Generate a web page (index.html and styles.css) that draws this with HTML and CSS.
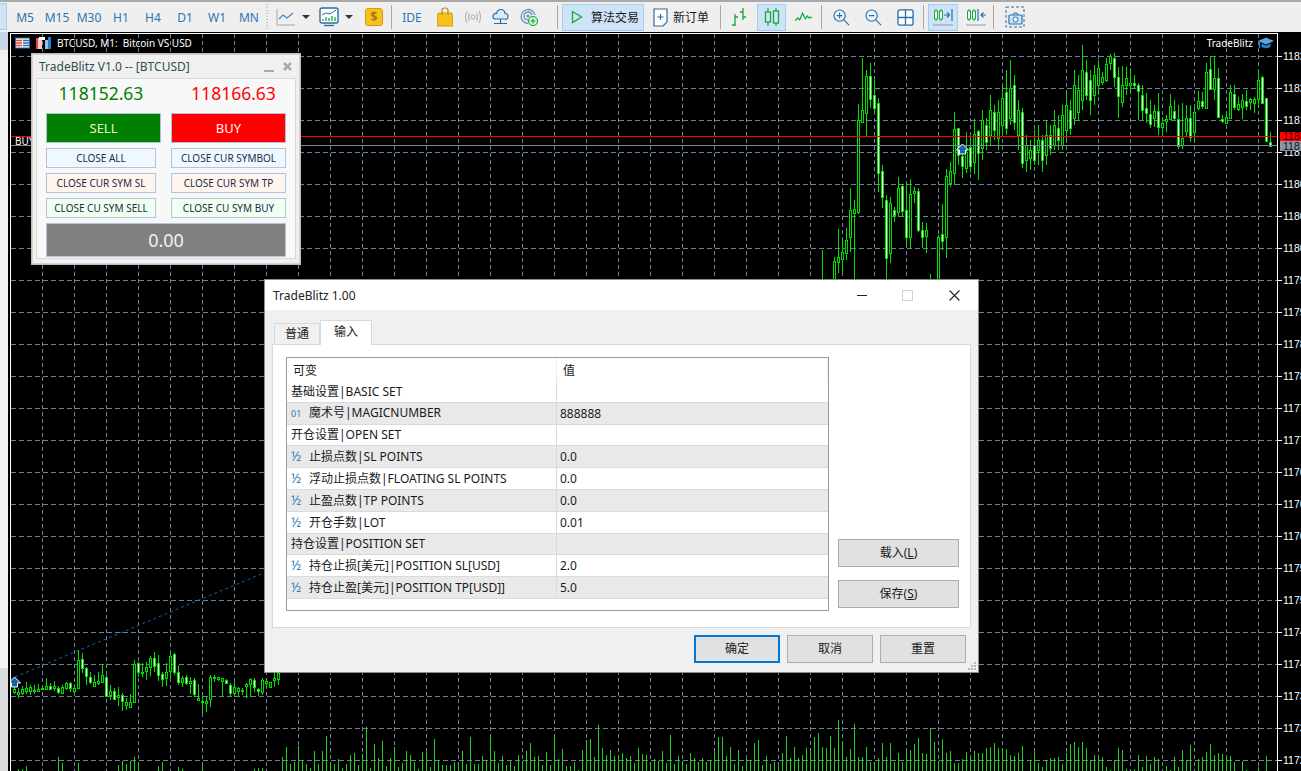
FILE: index.html
```html
<!DOCTYPE html>
<html lang="en">
<head>
    <meta charset="UTF-8">
    <title>MetaTrader - BTCUSD, M1</title>
    <link rel="stylesheet" href="styles.css">
</head>
<body>
    <div class="toolbar">
        <div class="stub"></div>
        <div class="tf">M5</div>
        <div class="tf">M15</div>
        <div class="tf">M30</div>
        <div class="tf">H1</div>
        <div class="tf">H4</div>
        <div class="tf">D1</div>
        <div class="tf">W1</div>
        <div class="tf">MN</div>
        <div class="grip"></div>

        <svg class="tool t-line" viewBox="0 0 20 20"><path d="M1 2V18H19" fill="none" stroke="#a8a8a8"/><path d="M3 12L7 8L11 11L17 6" fill="none" stroke="#3f86c4" stroke-width="1.2"/></svg>
        <div class="caret c-line"></div>
        <svg class="tool t-chart" viewBox="0 0 20 20"><rect x="1" y="1" width="18" height="15" rx="2" fill="#fff" stroke="#2b6ea6" stroke-width="1.4"/><path d="M3 8L7 6L11 7L17 3" fill="none" stroke="#2b6ea6"/><path d="M4 14V12M7 14V10M10 14V11M13 14V9M16 14V10" stroke="#22b14c" stroke-width="1.4"/><path d="M5 18.5H15" stroke="#2b6ea6" stroke-width="1.4"/></svg>
        <div class="caret c-chart"></div>
        <div class="gold">$</div>
        <div class="sep s-1"></div>
        <div class="ide">IDE</div>
        <svg class="tool t-bag" viewBox="0 0 16 20"><path d="M1 6H15L16 19H0Z" fill="#f6c21c" stroke="#d99a10"/><path d="M5 8V3Q5 1 8 1T11 3V8" fill="none" stroke="#b9860b" stroke-width="1.2"/></svg>
        <svg class="tool t-signal" viewBox="0 0 16 16"><circle cx="8" cy="8" r="2" fill="none" stroke="#b4b4b4" stroke-width="1.2"/><path d="M4.5 4Q2.5 8 4.5 12M11.5 4Q13.5 8 11.5 12M2 2Q-1 8 2 14M14 2Q17 8 14 14" fill="none" stroke="#b4b4b4" stroke-width="1.2"/></svg>
        <svg class="tool t-cloud" viewBox="0 0 17 18"><path d="M4 11Q0.5 11 1 8T4.5 5.5Q5.5 1.5 9 1.5T13 5.5Q16.5 6 16 9T13 11Z" fill="#d7ebfa" stroke="#2b6ea6" stroke-width="1.2"/><path d="M8.5 11V15M2 15.5H15" stroke="#2b6ea6" stroke-width="1.2"/></svg>
        <svg class="tool t-net" viewBox="0 0 18 18"><path d="M8 15.5A7 7 0 1 1 15 7M8 12A4 4 0 1 1 12 7" fill="none" stroke="#6f8fab" stroke-width="1.3"/><circle cx="8" cy="8" r="1.5" fill="#6f8fab"/><circle cx="13" cy="13" r="4.5" fill="#d8f5dc" stroke="#1fa53c" stroke-width="1.2"/><path d="M13 10.5V15.5M10.5 13H15.5" stroke="#1fa53c" stroke-width="1.2"/></svg>
        <div class="sep s-2"></div>
        <div class="algo">
            <svg class="play" viewBox="0 0 12 14"><path d="M1.5 1.5L10.5 7L1.5 12.5Z" fill="none" stroke="#18a83c" stroke-width="1.3"/></svg>
            <span>算法交易</span>
        </div>
        <div class="order">
            <svg class="order-icon" viewBox="0 0 15 19"><path d="M1 1H14V14L10 18H1Z" fill="#fff" stroke="#2b6ea6" stroke-width="1.2"/><path d="M7.5 6V12M4.5 9H10.5" stroke="#2b6ea6" stroke-width="1.2"/></svg>
            <span>新订单</span>
        </div>
        <div class="sep s-3"></div>
        <svg class="tool t-bars" viewBox="0 0 18 20"><path d="M5 7V19M2 18H5M5 10H8M13 1V13M10 5H13M13 10H16" fill="none" stroke="#18a83c" stroke-width="1.3"/></svg>
        <div class="active t-cand"><svg class="icon" viewBox="0 0 18 20"><path d="M5 1V19M13 1V19" stroke="#18a83c" stroke-width="1.2"/><rect x="2.5" y="5" width="5" height="10" fill="#d0e6fa" stroke="#18a83c" stroke-width="1.3"/><rect x="10.5" y="4" width="5" height="12" fill="#d0e6fa" stroke="#18a83c" stroke-width="1.3"/></svg></div>
        <svg class="tool t-wave" viewBox="0 0 18 14"><path d="M0 11L3 8L5 10L8 3L11 9L13 6L15 8L18 7" fill="none" stroke="#18a83c" stroke-width="1.3"/></svg>
        <div class="sep s-4"></div>
        <svg class="tool t-zin" viewBox="0 0 18 18"><circle cx="7" cy="7" r="6" fill="#eaf4fc" stroke="#2b6ea6" stroke-width="1.2"/><path d="M11.5 11.5L17 17M4 7H10M7 4V10" stroke="#2b6ea6" stroke-width="1.2"/></svg>
        <svg class="tool t-zout" viewBox="0 0 18 18"><circle cx="7" cy="7" r="6" fill="#eaf4fc" stroke="#2b6ea6" stroke-width="1.2"/><path d="M11.5 11.5L17 17M4 7H10" stroke="#2b6ea6" stroke-width="1.2"/></svg>
        <svg class="tool t-grid" viewBox="0 0 18 18"><rect x="1" y="1" width="16" height="16" rx="2" fill="#fff" stroke="#2b6ea6" stroke-width="1.4"/><path d="M9 1V17M1 9H17" stroke="#2b6ea6" stroke-width="1.4"/></svg>
        <div class="sep s-5"></div>
        <div class="active t-auto"><svg class="icon" viewBox="0 0 22 20"><path d="M4 2V14M9 2V14" stroke="#18a83c"/><rect x="2.5" y="4" width="3" height="8" fill="#fff" stroke="#18a83c"/><rect x="7.5" y="4" width="3" height="8" fill="#fff" stroke="#18a83c"/><path d="M12 8H17M15 5.5L17.5 8L15 10.5M20 2V14" fill="none" stroke="#2b6ea6" stroke-width="1.2"/><path d="M1 18H21" stroke="#9a9a9a"/></svg></div>
        <svg class="tool t-shift" viewBox="0 0 22 20"><path d="M4 2V14M9 2V14" stroke="#18a83c"/><rect x="2.5" y="4" width="3" height="8" fill="#fff" stroke="#18a83c"/><rect x="7.5" y="4" width="3" height="8" fill="#fff" stroke="#18a83c"/><path d="M13 2V14M21 8H16M18.500 5.500L16 8L18.500 10.500" fill="none" stroke="#2b6ea6" stroke-width="1.2"/><path d="M1 18H21" stroke="#9a9a9a"/></svg>
        <div class="sep s-6"></div>
        <svg class="tool t-shot" viewBox="0 0 20 22"><rect x="1" y="1" width="18" height="20" fill="none" stroke="#2b6ea6" stroke-dasharray="3 2"/><rect x="4" y="9" width="13" height="9" rx="1" fill="#cfe4f6" stroke="#2b6ea6" stroke-width="1.2"/><circle cx="10.500" cy="13.500" r="2.500" fill="#fff" stroke="#2b6ea6"/><path d="M8 9L9 7H12L13 9" fill="none" stroke="#2b6ea6"/></svg>
    </div>

    <div class="workspace">
        <div class="side">
            <div class="side-top"></div>
            <div class="side-mid"></div>
            <div class="side-low"></div>
        </div>
        <div class="chart">
            <svg id="chartCanvas" class="chart-canvas" viewBox="10 33 1291 738"></svg>

            <div class="chart-title">
                <svg class="title-icon" viewBox="0 0 15 11"><rect x="0.500" y="0.500" width="14" height="10" fill="#fff" stroke="#2b6ea6"/><path d="M1 3H7M1 5.500H7M1 8H7" stroke="#e0453a" stroke-width="1.300"/><path d="M8 3H14M8 5.500H14M8 8H14" stroke="#2b6ea6" stroke-width="1.300"/></svg>
                <svg class="title-icon" viewBox="0 0 15 12"><path d="M0 1H6V12H0Z" fill="#f8c9c2"/><path d="M0 1H2V12H0Z" fill="#e0453a"/><path d="M9 3H15V12H9Z" fill="#8ec3ee"/><path d="M12 0H15V12H12Z" fill="#2b7fc4"/><rect x="3" y="0" width="6" height="3" fill="#fff"/></svg>
                <span>BTCUSD, M1:&nbsp; Bitcoin VS USD</span>
            </div>
            <div class="brand">
                <span>TradeBlitz</span>
                <svg class="hat" viewBox="0 0 16 13"><path d="M0 4L8 0.500L16 4L8 7.500Z" fill="#5aa7e0"/><path d="M3.500 6.500V10Q8 12.500 12.500 10V6.500L8 8.500Z" fill="#2b7fc4"/><path d="M1.500 5V11" stroke="#2b7fc4" stroke-width="1.500"/></svg>
            </div>
            <div class="buy-tag">BUY</div>

            <!-- EA panel -->
            <div class="panel">
                <div class="panel-head">
                    <span>TradeBlitz V1.0 -- [BTCUSD]</span>
                    <div class="panel-min"></div>
                    <svg class="panel-close" viewBox="0 0 9 9"><path d="M1 1L8 8M8 1L1 8" stroke="#a9a9a9" stroke-width="2.500"/></svg>
                </div>
                <div class="panel-body">
                    <div class="price price-bid">118152.63</div>
                    <div class="price price-ask">118166.63</div>
                    <div class="big sell">SELL</div>
                    <div class="big buy">BUY</div>
                    <div class="small blue short">CLOSE ALL</div>
                    <div class="small blue">CLOSE CUR SYMBOL</div>
                    <div class="small shell short">CLOSE CUR SYM SL</div>
                    <div class="small shell">CLOSE CUR SYM TP</div>
                    <div class="small dew short">CLOSE CU SYM SELL</div>
                    <div class="small dew">CLOSE CU SYM BUY</div>
                    <div class="profit">0.00</div>
                </div>
            </div>

            <!-- properties dialog -->
            <div class="dialog">
                <div class="dialog-title">
                    <span>TradeBlitz 1.00</span>
                    <div class="win-min"></div>
                    <div class="win-max"></div>
                    <svg class="win-close" viewBox="0 0 11 11"><path d="M0.500 0.500L10.500 10.500M10.500 0.500L0.500 10.500" stroke="#222" stroke-width="1.100"/></svg>
                </div>
                <div class="tabs">
                    <div class="tab">普通</div>
                    <div class="tab tab-on">输入</div>
                </div>
                <div class="tab-page">
                    <div class="grid-box">
                        <table class="params">
                            <tr class="head"><th class="col-name">可变</th><th>值</th></tr>
                            <tr><td class="group">基础设置|BASIC SET</td><td></td></tr>
                            <tr class="alt"><td><span class="type type-int">01</span>魔术号|MAGICNUMBER</td><td>888888</td></tr>
                            <tr><td class="group">开仓设置|OPEN SET</td><td></td></tr>
                            <tr class="alt"><td><span class="type">½</span>止损点数|SL POINTS</td><td>0.0</td></tr>
                            <tr><td><span class="type">½</span>浮动止损点数|FLOATING SL POINTS</td><td>0.0</td></tr>
                            <tr class="alt"><td><span class="type">½</span>止盈点数|TP POINTS</td><td>0.0</td></tr>
                            <tr><td><span class="type">½</span>开仓手数|LOT</td><td>0.01</td></tr>
                            <tr class="alt"><td class="group">持仓设置|POSITION SET</td><td></td></tr>
                            <tr><td><span class="type">½</span>持仓止损[美元]|POSITION SL[USD]</td><td>2.0</td></tr>
                            <tr class="alt"><td><span class="type">½</span>持仓止盈[美元]|POSITION TP[USD]]</td><td>5.0</td></tr>
                        </table>
                    </div>
                    <div class="side-btns">
                        <div class="btn">载入(<u>L</u>)</div>
                        <div class="btn">保存(<u>S</u>)</div>
                    </div>
                </div>
                <div class="dialog-btns">
                    <div class="btn btn-main">确定</div>
                    <div class="btn">取消</div>
                    <div class="btn">重置</div>
                </div>
                <svg class="resize" viewBox="0 0 9 9"><path d="M6 0h2v2H6zM3 3h2v2H3zM6 3h2v2H6zM0 6h2v2H0zM3 6h2v2H3zM6 6h2v2H6z" fill="#b5b5b5"/></svg>
            </div>
        </div>
    </div>
    <script src="chart.js"></script>
</body>
</html>
```

FILE: styles.css
```css
html, body {
    margin: 0;
    height: 100%;
    overflow: hidden;
}
body {
    display: flex;
    flex-direction: column;
    background-color: #000;
    font-family: "Noto Sans", "Noto Sans CJK SC", sans-serif;
    font-size: 12px;
    color: #1a1a1a;
}

/* toolbar */
.toolbar {
    height: 30px;
    flex: none;
    display: flex;
    align-items: center;
    padding-left: 9px;
    background-color: #efefef;
    border-top: 2px solid #a9a9a9;
    position: relative;
}
.stub {
    position: absolute;
    left: 0;
    top: 1px;
    width: 6px;
    height: 25px;
    background-color: #cfe3f7;
    border: 1px solid #a5cdf0;
    border-left: none;
}
.tf {
    width: 32px;
    text-align: center;
    color: #2e75b0;
    font-size: 12px;
}
.grip {
    margin-left: 1px;
    width: 2px;
    height: 26px;
    background-image: linear-gradient(#c4c4c4 50%, transparent 50%);
    background-size: 2px 3px;
}
.tool { flex: none; display: block; }
.t-line { margin-left: 8px; width: 20px; height: 20px; }
.caret {
    width: 0;
    height: 0;
    border-left: 4px solid transparent;
    border-right: 4px solid transparent;
    border-top: 4px solid #333;
}
.c-line { margin-left: 6px; }
.t-chart { margin-left: 9px; width: 20px; height: 20px; }
.c-chart { margin-left: 6px; }
.gold {
    margin-left: 12px;
    width: 16px;
    height: 16px;
    border: 1px solid #d99a10;
    border-radius: 3px;
    background-color: #f6c21c;
    color: #a8760a;
    text-align: center;
    line-height: 16px;
    font-size: 12px;
    font-weight: 700;
}
.sep {
    flex: none;
    width: 1px;
    height: 24px;
    background-color: #a8a8a8;
}
.s-1 { margin-left: 8px; }
.ide { margin-left: 10px; width: 20px; text-align: center; color: #2e75b0; }
.t-bag { margin-left: 15px; width: 16px; height: 20px; }
.t-signal { margin-left: 12px; width: 16px; height: 16px; }
.t-cloud { margin-left: 11px; width: 17px; height: 18px; }
.t-net { margin-left: 11px; width: 18px; height: 18px; }
.s-2 { margin-left: 19px; }
.algo {
    margin-left: 4px;
    width: 80px;
    height: 25px;
    flex: none;
    display: flex;
    align-items: center;
    background-color: #cfe3f7;
    border: 1px solid #a5cdf0;
}
.play { margin-left: 8px; margin-right: 8px; width: 12px; height: 14px; }
.order {
    margin-left: 9px;
    width: 56px;
    flex: none;
    display: flex;
    align-items: center;
}
.order-icon { width: 15px; height: 19px; margin-right: 5px; flex: none; }
.algo span, .order span { white-space: nowrap; }
.s-3 { margin-left: 11px; }
.t-bars { margin-left: 9px; width: 18px; height: 20px; }
.active {
    flex: none;
    height: 25px;
    display: flex;
    align-items: center;
    justify-content: center;
    background-color: #cfe3f7;
    border: 1px solid #a5cdf0;
}
.t-cand { margin-left: 9px; width: 27px; }
.t-cand .icon { width: 18px; height: 20px; }
.t-wave { margin-left: 9px; width: 17px; height: 14px; }
.s-4 { margin-left: 9px; }
.t-zin { margin-left: 11px; width: 17px; height: 17px; }
.t-zout { margin-left: 15px; width: 17px; height: 17px; }
.t-grid { margin-left: 15px; width: 17px; height: 17px; }
.s-5 { margin-left: 9px; }
.t-auto { margin-left: 4px; width: 28px; }
.t-auto .icon { width: 22px; height: 20px; }
.t-shift { margin-left: 7px; width: 22px; height: 20px; }
.s-6 { margin-left: 6px; }
.t-shot { margin-left: 11px; width: 20px; height: 22px; }

/* chart area */
.workspace {
    flex: 1;
    min-height: 0;
    display: flex;
    padding-top: 1px;
}
.side {
    width: 8px;
    flex: none;
    display: flex;
    flex-direction: column;
    margin-top: -1px;
    margin-right: 2px;
    background-color: #efefef;
}
.side-top { height: 18px; background-color: #c9d6e3; }
.side-mid { flex: 1; background-color: #f2f2f2; }
.side-low { height: 103px; background-color: #dcdcdc; }
.chart {
    flex: 1;
    position: relative;
    overflow: hidden;
}
.chart-canvas {
    display: block;
    width: 1291px;
    height: 738px;
}
.chart-title {
    position: absolute;
    left: 5px;
    top: 3px;
    display: flex;
    align-items: center;
    color: #fff;
    font-size: 10px;
    white-space: nowrap;
}
.title-icon { width: 15px; height: 12px; margin-right: 6px; }
.brand {
    position: absolute;
    right: 27px;
    top: 3px;
    display: flex;
    align-items: center;
    color: #fff;
    font-size: 10px;
}
.hat { width: 16px; height: 13px; margin-left: 5px; }
.buy-tag {
    position: absolute;
    left: 5px;
    top: 101px;
    color: #fff;
    font-size: 10px;
}

/* EA panel */
.panel {
    position: absolute;
    left: 22px;
    top: 21px;
    width: 266px;
    height: 208px;
    background-color: #f0f0f0;
    border: 1px solid #d4d4d4;
    box-shadow: 0 0 0 1px #bdbdbd;
}
.panel-head {
    height: 23px;
    display: flex;
    align-items: center;
    padding: 0 6px;
    color: #2f4f4f;
    font-size: 12px;
}
.panel-head span { flex: 1; }
.panel-min {
    width: 10px;
    height: 2px;
    margin-top: 8px;
    margin-right: 9px;
    background-color: #a9a9a9;
}
.panel-close { width: 9px; height: 9px; margin-right: 1px; }
.panel-body {
    margin: 0 3px;
    height: 181px;
    box-sizing: border-box;
    padding: 0 9px;
    background-color: #f8f8f8;
    border: 1px solid #d8d8d8;
    display: grid;
    grid-template-columns: 115px 115px;
    grid-template-rows: 29px 30px 20px 20px 20px 34px;
    column-gap: 10px;
    row-gap: 5px;
    align-content: start;
}
.price {
    font-size: 17.500px;
    text-align: center;
    line-height: 29px;
}
.price-bid { color: #008000; padding-right: 5px; }
.price-ask { color: #ff0000; padding-left: 20px; padding-right: 0; margin-left: -10px; }
.big {
    border: 1px solid #b0c4de;
    box-sizing: border-box;
    color: #f5f5f5;
    font-size: 13px;
    line-height: 28px;
    text-align: center;
}
.sell { background-color: #008000; color: #e8f5c8; }
.buy { background-color: #ff0000; }
.small {
    border: 1px solid #b0c4de;
    box-sizing: border-box;
    color: #1c2b4a;
    font-size: 10px;
    line-height: 18px;
    text-align: center;
    white-space: nowrap;
}
.short { width: 110px; }
.blue { background-color: #f0f8ff; }
.shell { background-color: #fff5ee; }
.dew { background-color: #f0fff0; }
.profit {
    grid-column: 1 / 3;
    background-color: #808080;
    border: 1px solid #b0c4de;
    color: #f0f0f0;
    font-size: 18px;
    text-align: center;
    line-height: 32px;
}

/* dialog */
.dialog {
    position: absolute;
    left: 255px;
    top: 247px;
    width: 713px;
    height: 392px;
    background-color: #f0f0f0;
    box-shadow: 0 0 0 1px #8d8d8d;
    display: flex;
    flex-direction: column;
}
.dialog-title {
    height: 30px;
    flex: none;
    display: flex;
    align-items: center;
    padding-left: 8px;
    background-color: #fff;
    color: #222;
    position: relative;
}
.dialog-title span { flex: 1; }
.win-min { width: 10px; height: 1px; margin-right: 35px; background-color: #222; }
.win-max { width: 9px; height: 9px; margin-right: 36px; border: 1px solid #d0d0d0; }
.win-close { width: 11px; height: 11px; margin-right: 18px; }
.tabs {
    height: 25px;
    margin-top: 9px;
    padding-left: 9px;
    flex: none;
    display: flex;
    align-items: flex-end;
    position: relative;
    z-index: 1;
}
.tab {
    width: 46px;
    height: 21px;
    box-sizing: border-box;
    border: 1px solid #d9d9d9;
    border-bottom: none;
    text-align: center;
    line-height: 20px;
}
.tab-on {
    width: 52px;
    height: 25px;
    background-color: #fff;
    margin-bottom: -1px;
    padding-bottom: 1px;
    line-height: 22px;
}
.tab-page {
    width: 699px;
    height: 284px;
    margin-left: 7px;
    box-sizing: border-box;
    padding: 12px 0 0 13px;
    background-color: #fff;
    border: 1px solid #d9d9d9;
    display: flex;
    flex: none;
}
.grid-box {
    width: 543px;
    height: 254px;
    box-sizing: border-box;
    border: 1px solid #9a9aa4;
    flex: none;
}
.params {
    width: 541px;
    border-collapse: collapse;
    table-layout: fixed;
}
.params th {
    height: 24px;
    padding: 0 6px;
    text-align: left;
    font-weight: 400;
    border-right: 1px solid #ededed;
}
.params .col-name { width: 257px; }
.params td {
    height: 20px;
    padding: 0 3px;
    border-bottom: 1px solid #dadada;
    line-height: 20px;
    white-space: nowrap;
    overflow: hidden;
}
.params td:first-child { padding-left: 4px; border-right: 1px solid #dadada; }
.params .alt td { background-color: #e9e9e9; }
.type {
    display: inline-block;
    width: 18px;
    color: #2e7ab8;
    font-size: 13px;
}
.type-int { font-size: 9px; }
.side-btns {
    width: 121px;
    height: 251px;
    margin-left: 9px;
    display: flex;
    flex-direction: column;
    justify-content: flex-end;
    gap: 13px;
}
.btn {
    height: 28px;
    box-sizing: border-box;
    background-color: #e1e1e1;
    border: 1px solid #adadad;
    text-align: center;
    line-height: 26px;
}
.dialog-btns {
    margin-top: 7px;
    padding-right: 12px;
    display: flex;
    justify-content: flex-end;
    gap: 7px;
}
.dialog-btns .btn { width: 86px; }
.dialog-btns .btn-main { border: 2px solid #0078d7; line-height: 24px; }
.resize {
    position: absolute;
    right: 1px;
    bottom: 1px;
    width: 9px;
    height: 9px;
}
```

FILE: chart.js
```js
// x of first candle, then [high, low, bodyTop, bodyBottom, bearish]
const leftCandles = [
    [685,694,689,692,0],[688,698,692,694,0],[686,695,689,693,0],[682,694,688,691,0],[685,695,687,691,0],[685,694,690,691,1],
    [684,692,689,691,0],[686,690,688,689,0],[678,690,686,689,0],[683,690,686,689,1],[681,691,686,688,0],[686,694,688,692,1],
    [685,694,687,693,0],[682,690,683,688,0],[682,692,683,688,1],[684,695,688,691,0],[650,689,660,688,0],[653,673,659,668,1],
    [667,685,668,676,1],[672,684,677,682,1],[675,687,682,686,0],[672,685,681,683,0],[664,683,675,682,0],[675,697,677,696,1],
    [685,700,691,695,0],[688,700,691,699,1],[687,706,695,697,0],[693,711,695,701,1],[698,710,702,705,0],[694,708,702,707,0],
    [660,703,664,702,0],[662,677,663,672,1],[663,677,672,673,0],[662,680,667,671,0],[656,676,658,667,0],[652,672,658,666,1],
    [655,681,663,675,1],[672,687,674,679,1],[663,686,672,678,0],[653,678,656,671,0],[653,675,654,672,1],[665,685,672,682,1],
    [676,687,678,682,0],[675,685,677,683,1],[677,694,681,683,0],[678,697,680,694,1],[684,700,698,700,0],[696,713,701,702,0],
    [697,712,701,703,0],[675,707,677,699,0],[675,682,677,678,0],[677,681,677,679,0],[678,697,678,681,0],[679,684,680,683,1],
    [683,697,685,693,1],[682,697,687,693,0],[687,697,688,691,0],[688,695,690,691,0],[683,698,684,686,0],[678,697,679,684,0],
    [678,692,680,687,1],[688,696,689,691,1],[678,695,680,692,0],[679,688,681,683,0],[682,688,682,687,0],[673,687,678,680,0],
    [672,685,673,679,0]
];

const rightCandles = [
    [257,280,261,280,0],[229,273,257,262,0],[240,272,252,259,0],[228,260,240,253,0],[188,252,210,237,0],[200,280,209,213,0],
    [104,214,120,212,0],[58,122,110,122,0],[70,136,76,113,0],[63,108,76,99,1],[79,113,95,108,1],[98,192,103,173,1],
    [165,208,171,197,1],[195,280,200,258,1],[197,263,203,253,0],[207,222,210,215,1],[177,217,188,212,0],[184,217,186,211,1],
    [182,246,210,237,1],[179,248,194,237,0],[187,203,191,193,0],[188,232,191,230,1],[222,248,230,237,1],[223,253,230,236,0],
    [274,280,280,280,0],null,[235,280,237,280,0],[204,250,234,241,1],[169,258,176,237,0],[162,187,171,183,0],
    [112,185,129,173,0],[128,165,128,155,1],[148,178,156,166,1],[132,173,152,168,0],[136,173,147,166,1],[119,174,134,162,0],
    [130,180,131,153,1],
    [110,160,120,148,0],[118,150,125,142,1],[95,145,110,135,0],[105,140,112,130,1],[100,150,112,138,0],[85,135,98,125,0],
    [70,135,92,128,1],[60,125,88,118,0],[75,130,85,122,1],[100,150,110,135,0],[108,168,112,163,1],[135,172,145,160,0],
    [140,170,150,158,0],[130,165,145,160,1],[125,165,140,150,0],[135,172,140,160,1],[120,165,135,155,0],[125,155,135,148,1],
    [110,150,125,145,0],[115,150,128,140,1],[105,150,115,145,0],[90,140,105,130,0],[100,135,110,128,1],[70,125,85,118,0],
    [75,120,90,112,0],[45,110,70,100,0],[60,100,72,95,1],[70,115,80,100,1],[65,105,75,95,0],[60,95,68,85,0],
    [72,85,77,82,0],[58,82,64,80,0],[54,70,56,63,0],[53,87,58,77,1],[67,118,77,96,1],[66,107,85,102,0],
    [67,95,78,85,0],[68,93,83,85,0],[75,88,83,85,1],[83,120,85,91,1],[85,120,95,110,1],[93,123,108,113,1],
    [100,128,114,124,1],[105,127,111,118,0],[93,135,111,127,1],[117,135,123,127,0],[115,132,119,121,0],[94,120,106,119,0],
    [100,120,111,118,1],[105,149,119,146,1],[103,149,138,145,0],[105,137,118,131,0],[105,142,118,137,1],[108,140,112,132,0],
    [91,110,101,108,0],[92,109,101,106,1],[63,108,72,108,0],[56,90,69,89,1],[56,100,78,89,0],[68,118,78,117,1],
    [115,123,119,121,1],[112,124,117,123,0],[85,118,92,118,0],[85,110,94,107,1],[97,111,104,109,0],[94,119,100,107,0],
    [90,110,101,106,1],[98,110,99,102,0],[97,113,99,103,0],[69,107,80,99,0],[76,103,77,103,1],[98,141,98,141,1],
    [132,147,142,146,1]
];

// volume tops read off the right hand side, from x=962 step 4 (0 = no bar)
const rightVolumes = [
    759,752,757,751,753,753,748,747,743,748,748,749,755,756,753,746,0,760,751,763,767,760,758,758,757,764,753,744,742,
    747,742,748,760,755,758,757,767,770,760,748,750,769,771,769,755,767,756,764,757,759,0,766,770,757,767,750,760,745,
    0,759,757,752,744,755,753,754,757,756,762,0,761,770,0,0,767,0,756
];

const leftVolumes = {
    18:769, 22:769, 26:766, 58:757, 62:763, 78:763, 118:765, 122:761, 126:764, 130:761, 134:757, 138:763,
    158:766, 162:762, 178:767, 182:769, 202:765, 254:769, 258:768, 262:768, 282:757, 286:747
};

const GREEN = '#00e000';
const GRID = '#6f8297';
let out = '';

// grid
for (let x = 42; x < 1277; x += 32) {
    out += `<line x1="${x + 0.5}" y1="34" x2="${x + 0.5}" y2="771" stroke="${GRID}" stroke-dasharray="4 3"/>`;
}
const rows = [];
for (let y = 56; y < 771; y += 32) rows.push(y);
rows.forEach(y => {
    out += `<line x1="11" y1="${y + 0.5}" x2="1277" y2="${y + 0.5}" stroke="${GRID}" stroke-dasharray="5 3"/>`;
});

// trend line behind the dialog
out += `<line x1="15" y1="677" x2="266" y2="572" stroke="#1565a8" stroke-dasharray="3 3"/>`;

// volumes
function volume(x, top) {
    out += `<rect x="${x}" y="${top}" width="1" height="${771 - top}" fill="#1fd01f"/>`;
}
let seed = 17;
function rnd() {
    seed = (seed * 16807) % 2147483647;
    return seed / 2147483647;
}
for (let x = 14; x < 962; x += 4) {
    if (x < 290) {
        if (leftVolumes[x]) volume(x, leftVolumes[x]);
    } else {
        const peak = x > 790 && x < 860 ? 20 : 0;
        const top = 770 - Math.floor(rnd() * rnd() * 42 + rnd() * 8 + peak * rnd());
        volume(x, top);
    }
}
rightVolumes.forEach((top, i) => {
    if (top) volume(962 + i * 4, top);
});

function candle(x, c) {
    if (!c) return;
    const [hi, lo, top, bottom, bear] = c;
    out += `<rect x="${x}" y="${hi}" width="1" height="${lo - hi}" fill="${GREEN}"/>`;
    const h = Math.max(bottom - top, 1);
    out += `<rect x="${x - 1}" y="${top}" width="3" height="${h + 1}" fill="${GREEN}"/>`;
    if (h > 1) {
        out += `<rect x="${x}" y="${top + 1}" width="1" height="${h - 1}" fill="${bear ? '#fff' : '#000'}"/>`;
    }
}
leftCandles.forEach((c, i) => candle(14 + i * 4, c));
out += `<rect x="822" y="250" width="1" height="30" fill="${GREEN}"/>`;
rightCandles.forEach((c, i) => candle(834 + i * 4, c));

// price lines
out += `<rect x="11" y="136" width="1266" height="1" fill="#ff0000"/>`;
out += `<rect x="11" y="145" width="1266" height="1" fill="#778899"/>`;

// order arrows
[[14, 683], [962, 150]].forEach(([x, y]) => {
    out += `<path d="M${x + 0.5} ${y - 6}L${x + 6.5} ${y}H${x + 3.5}V${y + 4}H${x - 2.5}V${y}H${x - 5.5}Z" fill="#1565a8" stroke="#fff"/>`;
});

// frame and axis
out += `<rect x="10" y="33" width="1268" height="1" fill="#fff"/>`;
out += `<rect x="10" y="33" width="1" height="738" fill="#fff"/>`;
out += `<rect x="1277" y="33" width="1" height="738" fill="#fff"/>`;
const labels = [1182,1182,1181,1181,1180,1180,1180,1179,1179,1178,1178,1177,1177,1176,1176,1176,1175,1175,1174,1174,1173,1173,1172];
rows.forEach((y, i) => {
    out += `<rect x="1278" y="${y}" width="4" height="1" fill="#fff"/>`;
    out += `<text x="1283" y="${y + 4}" fill="#fff" font-size="10.500" font-family="Liberation Sans">${labels[i]}</text>`;
});
out += `<rect x="1280" y="132" width="21" height="9" fill="#ff0000"/>`;
out += `<text x="1283" y="140" fill="#300" font-size="10.500" font-family="Liberation Sans">1181</text>`;
out += `<rect x="1280" y="141" width="21" height="10" fill="#8896a6"/>`;
out += `<text x="1283" y="150" fill="#111" font-size="10.500" font-family="Liberation Sans">1181</text>`;

document.getElementById('chartCanvas').innerHTML = out;
```
